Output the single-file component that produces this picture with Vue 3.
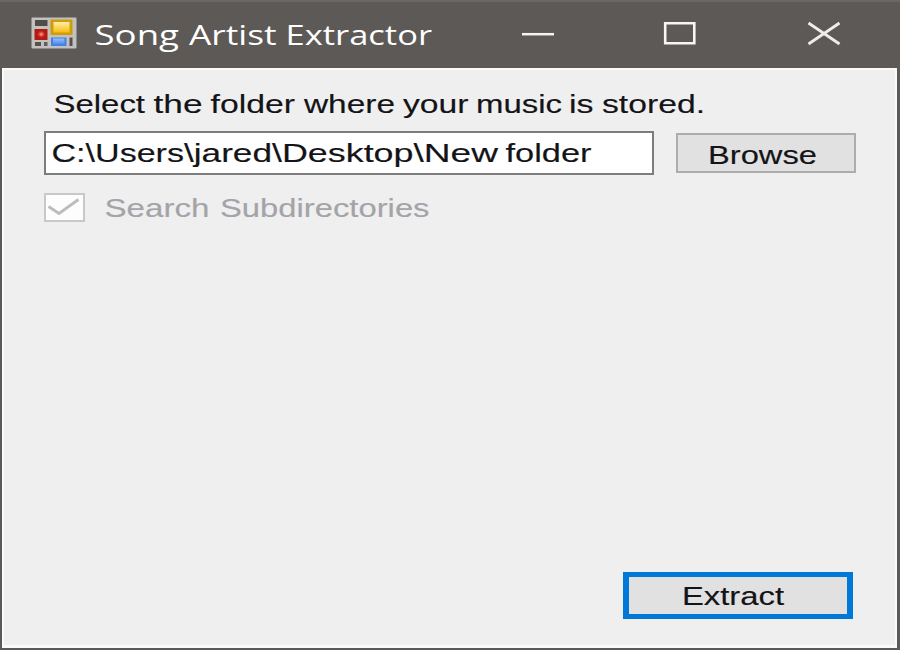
<script setup>
// Captions are set in wide glyphs: each word is [text, start, width],
// measured from the left edge of its line.
const title = [
  ['Song', -0.5, 84.5],
  ['Artist', 94, 87.5],
  ['Extractor', 190.5, 146.5],
]
const prompt = [
  ['Select', -0.5, 91.5],
  ['the', 99.5, 49],
  ['folder', 156.5, 84.5],
  ['where', 250, 91],
  ['your', 349, 65.5],
  ['music', 422, 86],
  ['is', 515, 24.5],
  ['stored.', 548, 103],
]
const option = [
  ['Search', -0.5, 105],
  ['Subdirectories', 115, 209.5],
]
// Folder path, split after each folder name.
const path = [
  ['C:\\Users', -0.5, 132.5],
  ['\\jared', 132, 88],
  ['\\Desktop', 220, 141.5],
  ['\\New', 361.5, 84.5],
]
</script>

<template>
  <div class="window">
    <header class="titlebar">
      <svg class="app-icon" width="46" height="32" viewBox="0 0 46 32">
        <defs>
          <linearGradient id="gold" x1="0" y1="0" x2="0" y2="1">
            <stop offset="0" stop-color="#fff0ae" />
            <stop offset="0.5" stop-color="#fcd658" />
            <stop offset="1" stop-color="#f5bd13" />
          </linearGradient>
          <linearGradient id="azure" x1="0" y1="0" x2="0" y2="1">
            <stop offset="0" stop-color="#98bdfb" />
            <stop offset="1" stop-color="#4a86ed" />
          </linearGradient>
          <radialGradient id="ruby">
            <stop offset="0" stop-color="#f5aaa0" />
            <stop offset="0.55" stop-color="#d93d30" />
            <stop offset="1" stop-color="#b41710" />
          </radialGradient>
        </defs>
        <rect x="0.5" y="0.5" width="45" height="31" rx="1" fill="#c2c1c0" />
        <rect x="4" y="3" width="12.5" height="6" fill="#4f4c4a" />
        <rect x="3.5" y="12" width="13" height="11" rx="0.5" fill="#b51a12" />
        <rect x="6" y="13.5" width="8.5" height="7.5" fill="url(#ruby)" />
        <rect x="19.5" y="2.5" width="22" height="15.5" rx="0.5" fill="#cf9c0c" />
        <rect x="22.5" y="5" width="16" height="10.5" fill="url(#gold)" />
        <rect x="20" y="20.5" width="15.5" height="8.5" rx="0.5" fill="#4380e4" />
        <rect x="22" y="21.5" width="11.5" height="6" fill="url(#azure)" />
        <rect x="4" y="25" width="6" height="4" fill="#55514f" />
        <rect x="13" y="25" width="3.5" height="4" fill="#625e5c" />
        <rect x="38.5" y="20.5" width="3" height="8.5" fill="#55514f" />
      </svg>
      <svg class="title" width="345" height="40">
        <text y="30"><template v-for="[word, x, w] in title" :key="x"><tspan :x="x" :textLength="w" lengthAdjust="spacingAndGlyphs">{{ word }}</tspan>{{ ' ' }}</template></text>
      </svg>
      <div class="controls">
        <svg width="34" height="26" viewBox="0 0 34 26">
          <path d="M1 14.2H33" stroke="#f4f4f4" stroke-width="2.5" />
        </svg>
        <svg width="34" height="26" viewBox="0 0 34 26">
          <path d="M1.2 3.2H30.3V23.3H1.2Z" fill="none" stroke="#f6f6f6" stroke-width="2.6" />
        </svg>
        <svg width="34" height="26" viewBox="0 0 34 26">
          <path d="M1.5 3L32.5 24M32.5 3L1.5 24" stroke="#eeeded" stroke-width="2.8" />
        </svg>
      </div>
    </header>

    <main class="client">
      <svg class="prompt" width="660" height="40">
        <text y="30"><template v-for="[word, x, w] in prompt" :key="x"><tspan :x="x" :textLength="w" lengthAdjust="spacingAndGlyphs">{{ word }}</tspan>{{ ' ' }}</template></text>
      </svg>
      <div class="row">
        <div class="field">
          <svg width="560" height="38">
            <text y="28"><tspan v-for="[part, x, w] in path" :key="x" :x="x" :textLength="w" lengthAdjust="spacingAndGlyphs">{{ part }}</tspan>{{ ' ' }}<tspan x="453.5" textLength="86" lengthAdjust="spacingAndGlyphs">folder</tspan></text>
          </svg>
        </div>
        <button class="button browse" type="button">
          <svg width="109" height="34">
            <text x="0" y="29" textLength="109" lengthAdjust="spacingAndGlyphs">Browse</text>
          </svg>
        </button>
      </div>
      <div class="option">
        <svg class="checkbox" width="41" height="29" viewBox="0 0 41 29">
          <rect x="1" y="1" width="39" height="27" fill="#fdfdfd" stroke="#c8c8c8" stroke-width="2" />
          <path d="M4.5 13.5L15 20.5L34.5 6.5" fill="none" stroke="#bcbcbc" stroke-width="2.8" />
        </svg>
        <svg class="option-label" width="335" height="40">
          <text y="31"><template v-for="[word, x, w] in option" :key="x"><tspan :x="x" :textLength="w" lengthAdjust="spacingAndGlyphs">{{ word }}</tspan>{{ ' ' }}</template></text>
        </svg>
      </div>
      <footer class="actions">
        <button class="button extract" type="button">
          <svg width="102" height="36">
            <text x="0" y="28" textLength="102" lengthAdjust="spacingAndGlyphs">Extract</text>
          </svg>
        </button>
      </footer>
    </main>
  </div>
</template>

<style>
body {
  margin: 0;
  overflow: hidden;
}
</style>

<style scoped>
.window {
  box-sizing: border-box;
  display: flex;
  flex-direction: column;
  width: 900px;
  height: 650px;
  padding: 0 3px 2px 2px;
  background: #5d5956;
  border-top: 2px solid #6b6765;
  font-family: "Liberation Sans", Arial, sans-serif;
  font-size: 26.5px;
}
svg {
  display: block;
  flex: none;
  overflow: visible;
}
.titlebar {
  display: flex;
  align-items: flex-start;
  height: 66px;
  flex: none;
  padding-left: 29px;
}
.app-icon {
  margin-top: 15px;
}
.title {
  margin: 13px 0 0 18px;
  fill: #fff;
  font-family: "Open Sans", "Noto Sans", sans-serif;
  font-size: 26.5px;
}
.controls {
  display: flex;
  gap: 109px;
  margin: 18px 0 0 81px;
}
.client {
  box-sizing: border-box;
  flex: 1;
  display: flex;
  flex-direction: column;
  align-items: flex-start;
  padding: 13px 38px 26px 40px;
  background: #efefef;
  border: 2px solid #fafafa;
  border-width: 2px 2px 3px;
  fill: #141418;
}
.client text {
  stroke: #141418;
  stroke-width: 0.15px;
}
.prompt {
  margin-left: 10px;
}
.row {
  display: flex;
  gap: 22px;
  margin-top: 8px;
}
.field {
  box-sizing: border-box;
  width: 610px;
  height: 44px;
  padding: 1px 0 0 6px;
  background: #fff;
  border: 2px solid #7d7d7d;
}
.button {
  box-sizing: border-box;
  display: flex;
  align-items: flex-start;
  padding: 0;
  font: inherit;
  background: #e1e1e1;
  border-radius: 0;
}
.browse {
  width: 180px;
  height: 40px;
  margin-top: 2px;
  padding-left: 30px;
  border: 2px solid #adadad;
}
.option {
  display: flex;
  height: 40px;
  margin-top: 11px;
}
.checkbox {
  margin-top: 7px;
}
.option-label {
  margin-left: 20px;
  fill: #a4a4a8;
}
.client .option-label text {
  stroke: #a4a4a8;
}
.actions {
  display: flex;
  align-self: flex-end;
  margin-top: auto;
}
.extract {
  width: 230px;
  height: 47px;
  padding-left: 53px;
  margin-right: 4px;
  border: solid #0078d7;
  border-width: 5px 6px;
}
</style>
